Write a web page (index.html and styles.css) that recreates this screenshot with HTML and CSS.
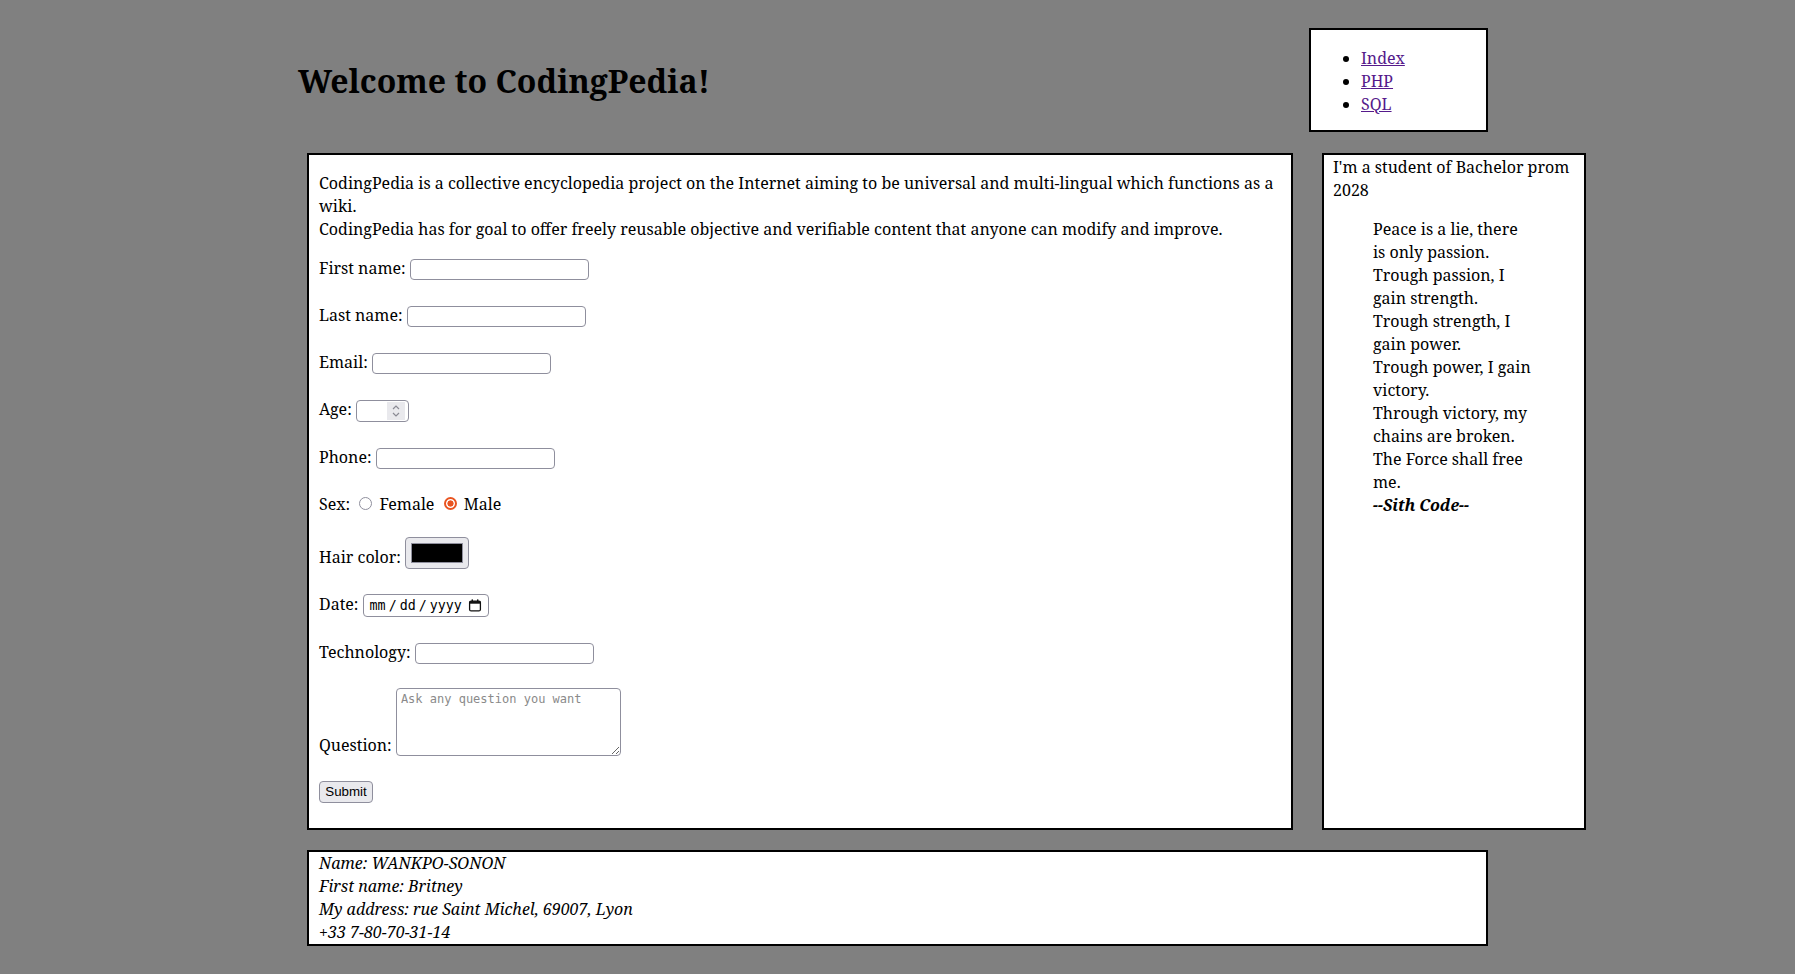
FILE: index.html
```html
<!DOCTYPE html>
<html lang="en">
<head>
<meta charset="utf-8">
<title>CodingPedia</title>
<link rel="stylesheet" href="styles.css">
</head>
<body>
<div class="page">
  <header class="header">
    <h1 class="title">Welcome to CodingPedia!</h1>
    <nav class="nav">
      <ul class="nav-list">
        <li><a class="nav-link" href="#">Index</a></li>
        <li><a class="nav-link" href="#">PHP</a></li>
        <li><a class="nav-link" href="#">SQL</a></li>
      </ul>
    </nav>
  </header>

  <div class="content">
    <main class="main">
      <p class="intro">CodingPedia is a collective encyclopedia project on the Internet aiming to be universal and multi-lingual which functions as a wiki.<br>CodingPedia has for goal to offer freely reusable objective and verifiable content that anyone can modify and improve.</p>
      <form class="form">
        <div class="row"><label>First name:</label> <input class="field" type="text"></div>
        <div class="row"><label>Last name:</label> <input class="field" type="text"></div>
        <div class="row"><label>Email:</label> <input class="field" type="email"></div>
        <div class="row"><label>Age:</label> <span class="num"><input class="num-input" type="text"><span class="spin"><svg width="10" height="16" viewBox="0 0 10 16"><path d="M2 6 L5 3 L8 6" fill="none" stroke="#8a8a94" stroke-width="1.2"/><path d="M2 10 L5 13 L8 10" fill="none" stroke="#8a8a94" stroke-width="1.2"/></svg></span></span></div>
        <div class="row"><label>Phone:</label> <input class="field" type="tel"></div>
        <div class="row row-sex"><label>Sex:</label> <input class="radio" type="radio" name="sex"> Female <input class="radio" type="radio" name="sex" checked> Male</div>
        <div class="row"><label>Hair color:</label> <span class="color"><span class="swatch"></span></span></div>
        <div class="row"><label>Date:</label> <span class="date"><span class="date-text">mm<span class="sep">/</span>dd<span class="sep">/</span>yyyy</span><svg class="cal" width="14" height="13" viewBox="0 0 14 13"><rect x="1.6" y="2.1" width="10.8" height="9.8" rx="1.5" fill="none" stroke="#111" stroke-width="1.3"/><rect x="1.6" y="2.1" width="10.8" height="2.6" fill="#111"/><rect x="3.6" y="0.4" width="1.4" height="2.4" fill="#111"/><rect x="9" y="0.4" width="1.4" height="2.4" fill="#111"/></svg></span></div>
        <div class="row"><label>Technology:</label> <input class="field" type="text"></div>
        <div class="row row-question"><label>Question:</label> <textarea class="question" placeholder="Ask any question you want"></textarea></div>
        <div class="row row-last"><button class="submit" type="button">Submit</button></div>
      </form>
    </main>

    <aside class="aside">
      <div class="aside-text">I'm a student of Bachelor prom 2028</div>
      <blockquote class="quote">Peace is a lie, there is only passion.<br>Trough passion, I gain strength.<br>Trough strength, I gain power.<br>Trough power, I gain victory.<br>Through victory, my chains are broken.<br>The Force shall free me.<br><strong class="sig">--Sith Code--</strong></blockquote>
    </aside>
  </div>

  <footer class="footer">
    <div class="footer-line">Name: WANKPO-SONON</div>
    <div class="footer-line">First name: Britney</div>
    <div class="footer-line">My address: rue Saint Michel, 69007, Lyon</div>
    <div class="footer-line">+33 7-80-70-31-14</div>
  </footer>
</div>
</body>
</html>
```

FILE: styles.css
```css
html, body {
  margin: 0;
  padding: 0;
}
body {
  background: #808080;
  font-family: "Noto Serif", "DejaVu Serif", serif;
  font-size: 16px;
  line-height: 23px;
  color: #000;
}
.page {
  padding: 28px 0 0 298px;
  display: flex;
  flex-direction: column;
  gap: 20px;
}
.header {
  width: 1190px;
  display: flex;
  align-items: center;
  justify-content: space-between;
  margin-bottom: 1px;
}
.title {
  margin: 0;
  font-size: 32px;
  line-height: normal;
  font-weight: bold;
}
.nav {
  width: 179px;
  height: 104px;
  box-sizing: border-box;
  border: 2px solid #000;
  background: #fff;
  padding: 0 10px;
}
.nav-list {
  margin: 17px 0 15px 0;
  padding-left: 40px;
}
.nav-link {
  color: #551a8b;
}
.content {
  display: flex;
  gap: 29px;
  margin-left: 9px;
  align-items: stretch;
}
.main {
  width: 986px;
  box-sizing: border-box;
  border: 2px solid #000;
  background: #fff;
  padding: 17px 10px 25px 10px;
}
.intro {
  margin: 0 0 16px 0;
}
.form {
  margin: 0;
}
.row {
  margin-bottom: 24px;
}
.row-sex {
  margin-bottom: 21px;
}
.row-question {
  margin-bottom: 22px;
}
.row-last {
  margin-bottom: 0;
}
.field {
  width: 179px;
  height: 21px;
  box-sizing: border-box;
  border: 1px solid #8f8f9d;
  border-radius: 4px;
  padding: 1px 4px;
  font: 13.33px "DejaVu Sans", sans-serif;
  background: #fff;
  margin: 0;
}
.num {
  display: inline-flex;
  align-items: center;
  width: 53px;
  height: 22px;
  box-sizing: border-box;
  border: 1px solid #8f8f9d;
  border-radius: 4px;
  background: #fff;
  padding: 0 3px 0 2px;
}
.num-input {
  border: 0;
  padding: 0;
  margin: 0;
  width: 28px;
  height: 18px;
  font: 13.33px "DejaVu Sans", sans-serif;
  outline: none;
  background: transparent;
}
.spin {
  display: flex;
  align-items: center;
  justify-content: center;
  width: 18px;
  height: 18px;
  background: #e9e9ed;
  margin-left: auto;
}
.radio {
  appearance: none;
  -webkit-appearance: none;
  box-sizing: border-box;
  width: 13px;
  height: 13px;
  margin: 3px 3px 0 5px;
  border: 1px solid #8f8f9d;
  border-radius: 50%;
  background: #fff;
}
.radio:checked {
  border: 2px solid #e95420;
  background: radial-gradient(circle, #e95420 0 2.8px, #fff 3.4px);
}
.color {
  display: inline-flex;
  align-items: center;
  justify-content: center;
  width: 64px;
  height: 32px;
  box-sizing: border-box;
  border: 1px solid #8f8f9d;
  border-radius: 4px;
  background: #e9e9ed;
}
.swatch {
  display: block;
  width: 52px;
  height: 20px;
  box-sizing: border-box;
  border: 1px solid #8f8f9d;
  background: #000;
}
.date {
  display: inline-flex;
  align-items: center;
  width: 126px;
  height: 23px;
  box-sizing: border-box;
  border: 1px solid #8f8f9d;
  border-radius: 4px;
  background: #fff;
  padding: 0 6px;
  gap: 6px;
}
.date-text {
  font: 13.33px "DejaVu Sans Mono", monospace;
  line-height: 16px;
  white-space: nowrap;
  flex: 0 0 auto;
}
.sep {
  margin: 0 3px;
}
.cal {
  display: block;
  flex: 0 0 auto;
}
.question {
  width: 225px;
  height: 68px;
  box-sizing: border-box;
  border: 1px solid #8f8f9d;
  border-radius: 4px;
  padding: 3px 4px;
  font: 12px "DejaVu Sans Mono", monospace;
  vertical-align: text-bottom;
  margin: 0;
  resize: both;
  background: #fff;
}
.question::placeholder {
  color: #8a8a8a;
}
.submit {
  height: 22px;
  width: 54px;
  box-sizing: border-box;
  border: 1px solid #8f8f9d;
  border-radius: 4px;
  background: #e9e9ed;
  font: 13.33px "Liberation Sans", Arial, sans-serif;
  padding: 0 4px;
  margin: 0;
  color: #000;
}
.aside {
  width: 264px;
  box-sizing: border-box;
  border: 2px solid #000;
  background: #fff;
  padding: 1px 9px 0 9px;
}
.quote {
  margin: 16px 42px 16px 40px;
}
.sig {
  font-style: italic;
}
.footer {
  width: 1181px;
  margin-left: 9px;
  box-sizing: border-box;
  border: 2px solid #000;
  background: #fff;
  padding: 0 10px;
  font-style: italic;
}
```
